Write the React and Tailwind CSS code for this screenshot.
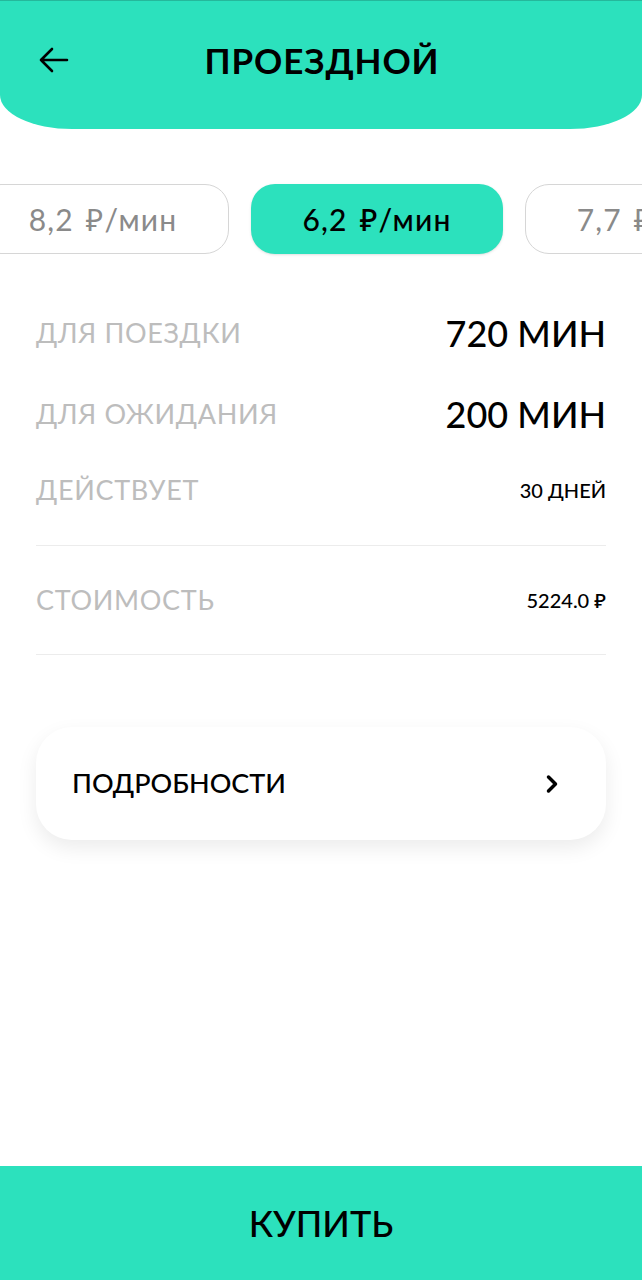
import { ChevronRight } from 'lucide-react';

const font = { fontFamily: '"Lato", "Noto Sans", sans-serif' };

const plans = [
    { price: '8,2', active: false },
    { price: '6,2', active: true },
    { price: '7,7', active: false },
];

const Row = ({ label, value, big }) => (
    <div className="h-[44px] flex items-center justify-between">
        <span className="text-[27px] tracking-wide text-[#bdbdbd]">{label}</span>
        <span className={big ? 'text-[36px] font-medium text-black' : 'text-[20px] font-medium text-black'}>{value}</span>
    </div>
);

export default function App() {
    return (
        <div className="h-[1280px] w-[642px] bg-white flex flex-col overflow-hidden" style={font}>
            <header className="h-[129px] bg-[#2ce1bd] rounded-b-[72px_34px] flex items-center pl-[38px] pr-9 pb-[10px] border-t border-[#25b89b]">
                <svg width="32" height="32" viewBox="0 0 32 32" fill="none" stroke="black" strokeWidth="2.6" strokeLinecap="round" strokeLinejoin="round">
                    <path d="M29 16H3M14 5L3 16l11 11" />
                </svg>
                <h1 className="flex-1 text-center text-[35px] font-bold tracking-wide text-black pr-8">ПРОЕЗДНОЙ</h1>
            </header>

            <div className="mt-[55px] flex gap-[22px] -ml-[23px] w-max">
                {plans.map((p) => (
                    <div
                        key={p.price}
                        className={`w-[252px] h-[70px] rounded-[24px] flex items-center justify-center gap-[12px] text-[30px] tracking-[0.04em] ${p.active ? 'bg-[#2ce1bd] text-black font-medium shadow-sm' : 'bg-white border border-[#d6d6d6] text-[#8a8a8a]'}`}
                    >
                        <span>{p.price}</span>
                        <span>₽/мин</span>
                    </div>
                ))}
            </div>

            <div className="px-9 mt-[57px]">
                <Row label="ДЛЯ ПОЕЗДКИ" value="720 МИН" big />
                <div className="mt-[37px]">
                    <Row label="ДЛЯ ОЖИДАНИЯ" value="200 МИН" big />
                </div>
                <div className="mt-[32px]">
                    <Row label="ДЕЙСТВУЕТ" value="30 ДНЕЙ" />
                </div>
                <div className="mt-[33px] border-t border-[#ececec]" />
                <div className="mt-[32px]">
                    <Row label="СТОИМОСТЬ" value="5224.0 ₽" />
                </div>
                <div className="mt-[32px] border-t border-[#ececec]" />

                <div className="mt-[72px] h-[113px] rounded-[36px] bg-white shadow-[0_8px_20px_rgba(0,0,0,0.08)] flex items-center justify-between pl-9 pr-10">
                    <span className="text-[27px] text-black font-medium">ПОДРОБНОСТИ</span>
                    <ChevronRight className="w-7 h-7 text-black" strokeWidth={3} />
                </div>
            </div>

            <button className="mt-auto h-[114px] bg-[#2ce1bd] flex items-center justify-center text-[36px] font-medium text-black">
                КУПИТЬ
            </button>
        </div>
    );
}
